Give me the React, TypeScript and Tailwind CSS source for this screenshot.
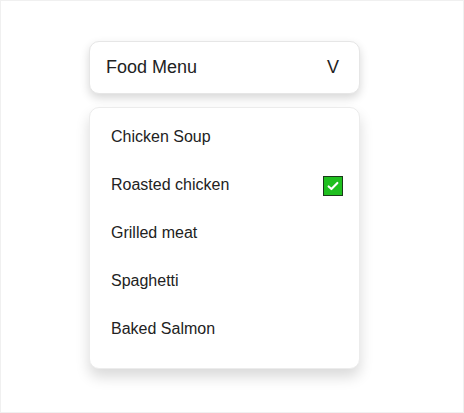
const items = ['Chicken Soup', 'Roasted chicken', 'Grilled meat', 'Spaghetti', 'Baked Salmon'];

export default function App() {
    const selected = 'Roasted chicken';

    return (
        <div
            className="min-h-[413px] w-[464px] border border-[#f0f0f0] bg-white text-[#222]"
            style={{ fontFamily: '"Liberation Sans", Arial, sans-serif' }}
        >
            <div className="ml-[88px] mt-[40px] flex w-[271px] flex-col gap-[13px]">
                {/* Header */}
                <div className="flex h-[53px] items-center justify-between rounded-[10px] border border-[#e6e6e6] bg-white pl-[16px] pr-[20px] text-[18px] shadow-[0_4px_10px_rgba(0,0,0,0.16)]">
                    <span>Food Menu</span>
                    <span>V</span>
                </div>

                {/* List */}
                <div className="rounded-[10px] border border-[#ececec] bg-white pb-[15px] pt-[5px] shadow-[0_8px_14px_rgba(0,0,0,0.15)]">
                    {items.map((item) => (
                        <div key={item} className="flex h-[48px] items-center justify-between pl-[21px] pr-[16px] text-[16px]">
                            <span>{item}</span>
                            {item === selected && (
                                <span className="mt-[2px] flex h-[20px] w-[20px] items-center justify-center border border-[#1a3a1a] bg-[#1fbf1f]">
                                    <svg viewBox="0 0 16 16" className="h-[14px] w-[14px]" fill="none" stroke="white" strokeWidth="2.4" strokeLinecap="round" strokeLinejoin="round">
                                        <path d="M3 8.5l3.2 3L13 4.5" />
                                    </svg>
                                </span>
                            )}
                        </div>
                    ))}
                </div>
            </div>
        </div>
    );
}
